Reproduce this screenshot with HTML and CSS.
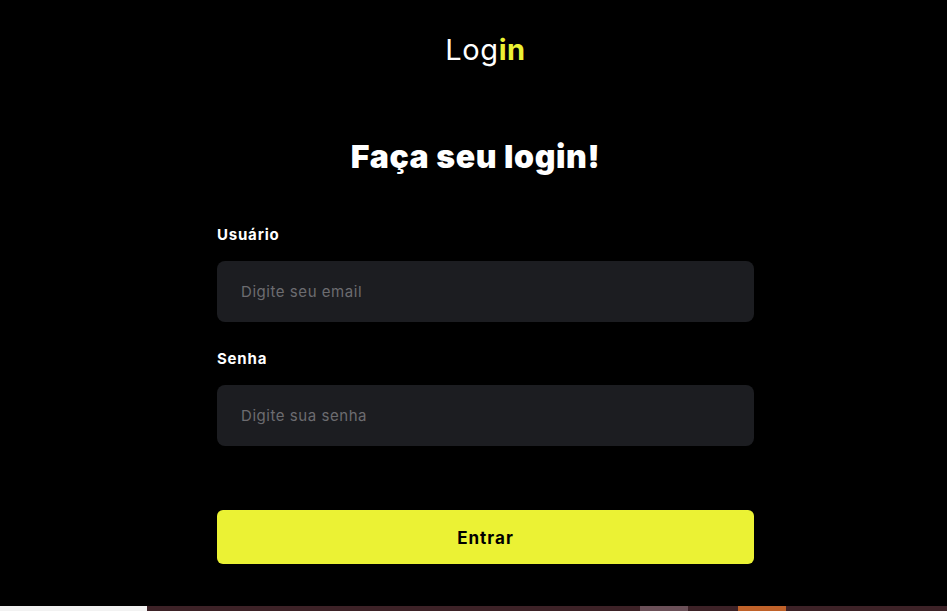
FILE: index.html
```html
<!DOCTYPE html>
<html lang="pt-BR">
<head>
<meta charset="utf-8">
<title>Login</title>
<link rel="stylesheet" href="styles.css">
</head>
<body>
<main class="page">
  <header class="brand">Log<span class="brand-accent">in</span></header>
  <h1 class="title">Faça seu login!</h1>
  <form class="form">
    <label class="label" for="user">Usuário</label>
    <input class="field" id="user" type="email" placeholder="Digite seu email">
    <label class="label label-second" for="pass">Senha</label>
    <input class="field" id="pass" type="password" placeholder="Digite sua senha">
    <button class="submit" type="button">Entrar</button>
  </form>
</main>
<div class="strip">
  <div class="seg seg-white"></div>
  <div class="seg seg-dark1"></div>
  <div class="seg seg-gray"></div>
  <div class="seg seg-dark2"></div>
  <div class="seg seg-orange"></div>
  <div class="seg seg-dark3"></div>
</div>
</body>
</html>
```
FILE: styles.css
```css
* { box-sizing: border-box; }
html, body { margin: 0; padding: 0; background: #000; }
body {
  font-family: "Inter", "Lato", sans-serif;
  color: #fff;
  height: 611px;
  overflow: hidden;
}
.page {
  height: 606px;
  display: flex;
  flex-direction: column;
  align-items: center;
  padding-left: 24px;
  padding-top: 33px;
}
.brand {
  font-size: 29px;
  line-height: 34px;
  font-weight: 400;
  letter-spacing: 0.6px;
}
.brand-accent { color: #ebf234; font-weight: 700; }
.title {
  margin: 70px 0 0 -20px;
  font-size: 32px;
  line-height: 40px;
  font-weight: 900;
  letter-spacing: 0.6px;
}
.form {
  width: 537px;
  display: flex;
  flex-direction: column;
  margin-top: 48px;
}
.label {
  font-size: 15px;
  line-height: 20px;
  font-weight: 700;
  letter-spacing: 0.8px;
  color: #fff;
}
.label-second { margin-top: 27px; }
.field {
  margin-top: 16px;
  height: 61px;
  border: none;
  border-radius: 8px;
  background: #1c1d21;
  padding: 0 24px;
  font-family: inherit;
  font-size: 15px;
  letter-spacing: 0.55px;
  color: #fff;
  outline: none;
}
.field::placeholder { color: #6c6c70; }
.submit {
  margin-top: 64px;
  height: 54px;
  border: none;
  border-radius: 6px;
  background: #ebf234;
  color: #000;
  font-family: inherit;
  font-size: 17px;
  font-weight: 700;
  letter-spacing: 1px;
  padding-top: 3px;
}
.strip { display: flex; height: 5px; }
.seg { height: 5px; }
.seg-white { width: 147px; background: #f2f2f2; }
.seg-dark1 { width: 493px; background: #3d2227; }
.seg-gray { width: 48px; background: #6b5058; }
.seg-dark2 { width: 50px; background: #3d2227; }
.seg-orange { width: 48px; background: #c0622a; }
.seg-dark3 { flex: 1; background: #3d2227; }
```
